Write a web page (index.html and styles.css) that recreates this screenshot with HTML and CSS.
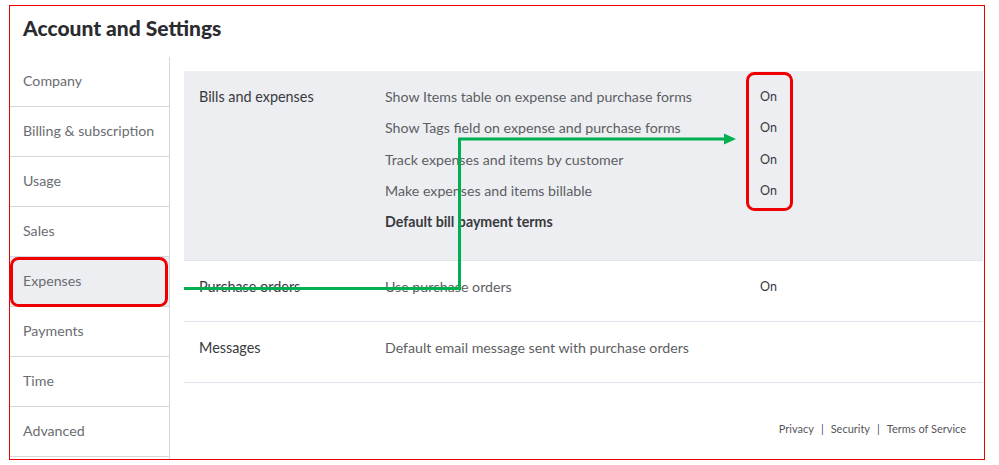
FILE: index.html
```html
<!DOCTYPE html>
<html>
<head>
<meta charset="utf-8">
<link rel="stylesheet" href="styles.css">
</head>
<body>
<div class="frame">
  <h1 class="title">Account and Settings</h1>
  <div class="layout">
    <nav class="sidebar">
      <div class="nav-item">Company</div>
      <div class="nav-item">Billing &amp; subscription</div>
      <div class="nav-item">Usage</div>
      <div class="nav-item">Sales</div>
      <div class="nav-item active">Expenses</div>
      <div class="nav-item">Payments</div>
      <div class="nav-item">Time</div>
      <div class="nav-item">Advanced</div>
    </nav>
    <main class="content">
      <section class="section panel">
        <div class="label">Bills and expenses</div>
        <div class="settings">
          <div class="setting"><span class="desc">Show Items table on expense and purchase forms</span><span class="val">On</span></div>
          <div class="setting"><span class="desc">Show Tags field on expense and purchase forms</span><span class="val">On</span></div>
          <div class="setting"><span class="desc">Track expenses and items by customer</span><span class="val">On</span></div>
          <div class="setting"><span class="desc">Make expenses and items billable</span><span class="val">On</span></div>
          <div class="setting"><span class="desc strong">Default bill payment terms</span></div>
        </div>
      </section>
      <section class="section row">
        <div class="label">Purchase orders</div>
        <div class="settings">
          <div class="setting"><span class="desc">Use purchase orders</span><span class="val">On</span></div>
        </div>
      </section>
      <section class="section row">
        <div class="label">Messages</div>
        <div class="settings">
          <div class="setting"><span class="desc">Default email message sent with purchase orders</span></div>
        </div>
      </section>
      <footer class="footer">
        <span>Privacy</span><span class="sep">|</span><span>Security</span><span class="sep">|</span><span>Terms of Service</span>
      </footer>
    </main>
  </div>
  <svg class="annotations" width="999" height="465" viewBox="0 0 999 465">
    <rect x="11.5" y="258.5" width="155" height="47" rx="7" fill="none" stroke="#ee0000" stroke-width="3"/>
    <rect x="747.5" y="73.5" width="44" height="136" rx="7" fill="none" stroke="#ee0000" stroke-width="3"/>
    <polyline points="184,288.5 459.5,288.5 459.5,139 727,139" fill="none" stroke="#00b050" stroke-width="3"/>
    <polygon points="724,133.5 736,139 724,144.5" fill="#00b050"/>
  </svg>
</div>
</body>
</html>
```

FILE: styles.css
```css
* { box-sizing: border-box; }
html, body {
  margin: 0;
  padding: 0;
  background: #ffffff;
}
body {
  font-family: "Lato", "Open Sans", sans-serif;
  color: #393a3d;
}
.frame {
  position: relative;
  margin: 5px 0 0 9px;
  width: 976px;
  height: 455px;
  border: 1px solid #ee0000;
  overflow: hidden;
}
.title {
  margin: 0;
  padding: 10px 0 0 13px;
  height: 51px;
  font-size: 21px;
  line-height: 24px;
  font-weight: 900;
  color: #2b2c30;
}
.layout {
  display: flex;
  height: 403px;
}
.sidebar {
  width: 160px;
  flex: none;
  border-right: 1px solid #d4d7dc;
}
.nav-item {
  height: 50px;
  padding: 0 0 2px 13px;
  display: flex;
  align-items: center;
  font-size: 14.2px;
  color: #6b6c72;
  border-bottom: 1px solid #d4d7dc;
}
.nav-item.active {
  background: #eceef1;
}
.content {
  flex: 1;
  padding: 14px 1px 0 14px;
  display: flex;
  flex-direction: column;
}
.section {
  display: flex;
  border-bottom: 1px solid #dfe5ec;
  padding-top: 10px;
}
.panel {
  background: #eceef1;
  height: 190px;
}
.row {
  height: 61px;
}
.label {
  width: 201px;
  flex: none;
  padding-left: 15px;
  font-size: 14.4px;
  color: #393a3d;
  line-height: 31px;
}
.settings {
  flex: 1;
  display: flex;
  flex-direction: column;
}
.setting {
  display: flex;
  height: 31.3px;
  align-items: center;
}
.desc {
  width: 375px;
  flex: none;
  font-size: 14.2px;
  color: #5d5e63;
}
.desc.strong {
  font-weight: 700;
  color: #393a3d;
}
.val {
  font-size: 12.5px;
  color: #393a3d;
}
.footer {
  padding: 39px 17px 0 0;
  display: flex;
  justify-content: flex-end;
  line-height: 14px;
  font-size: 11px;
  color: #55565b;
}
.footer .sep {
  margin: 0 7px;
}
.annotations {
  position: absolute;
  left: -10px;
  top: -6px;
  pointer-events: none;
}
```
